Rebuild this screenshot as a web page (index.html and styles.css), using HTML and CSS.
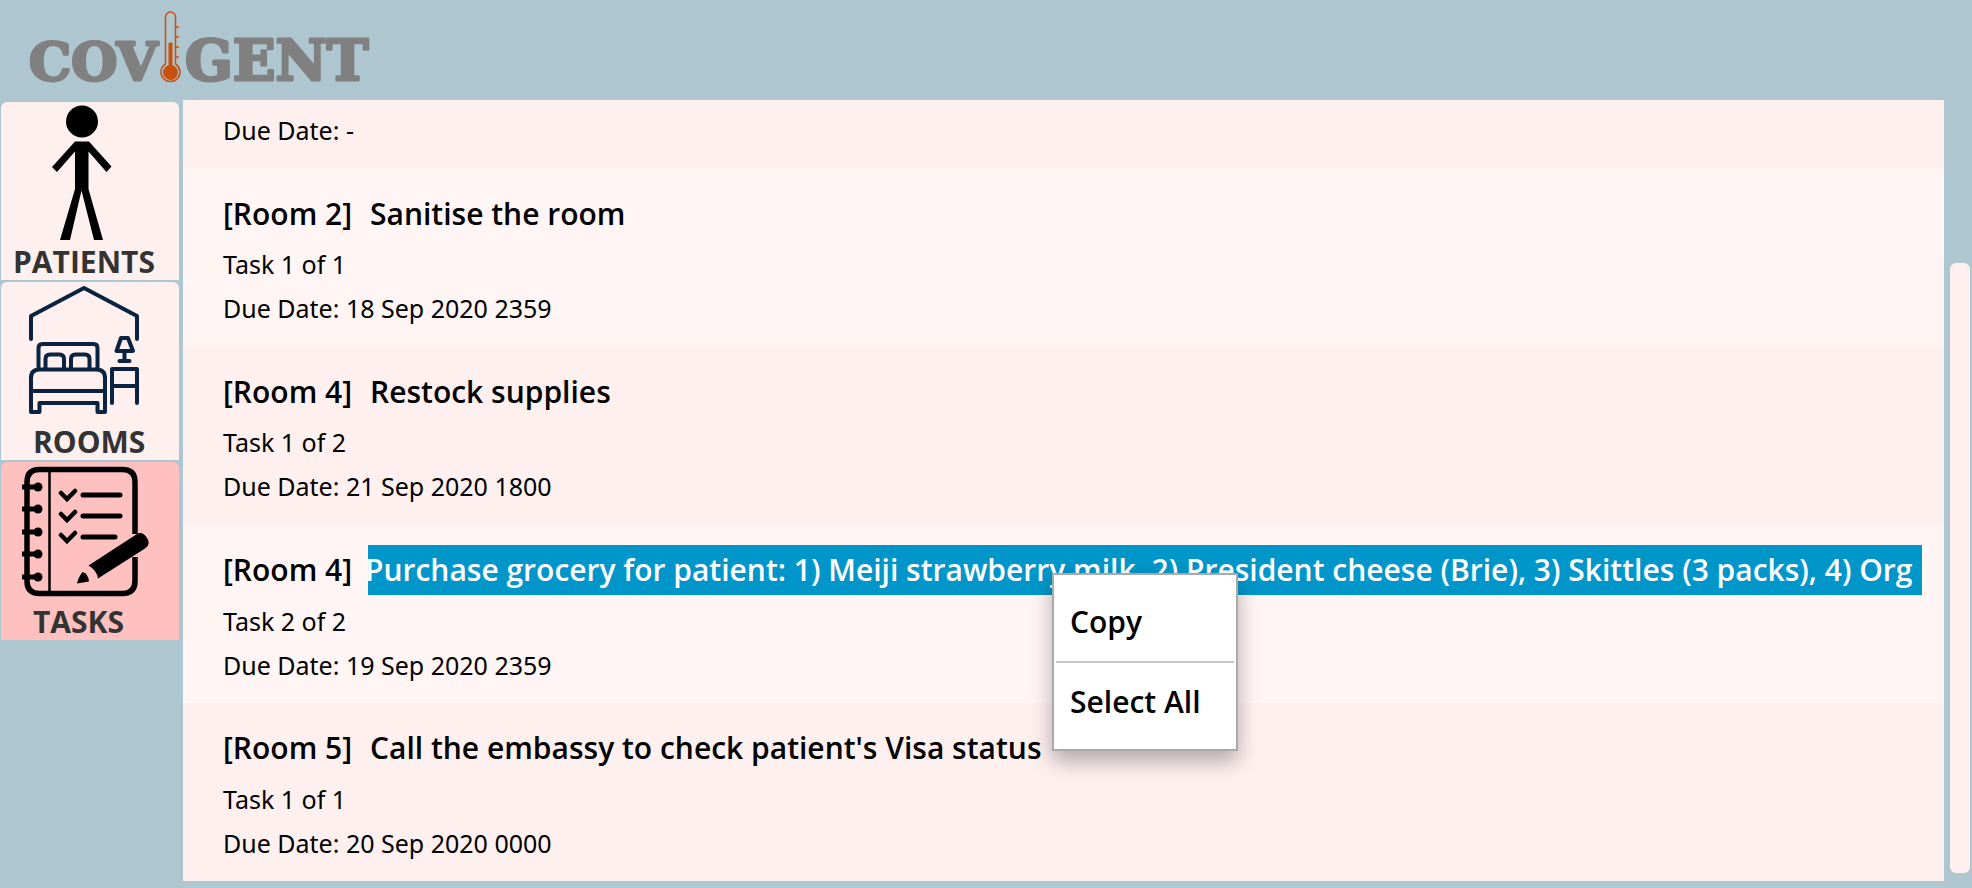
FILE: index.html
```html
<!DOCTYPE html>
<html lang="en">
<head>
<meta charset="utf-8">
<title>Covigent</title>
<link rel="stylesheet" href="styles.css">
</head>
<body>
<div class="app">
  <header class="header">
    <svg class="logo" width="376" height="100" viewBox="0 0 376 100" role="img" aria-label="Covigent">
      <g class="logo-text">
        <text class="logo-start" x="29" y="80">COV</text>
        <text x="185" y="80">GENT</text>
      </g>
      <g fill="none" stroke="#c8500f">
        <path d="M165.500 64V17a5 5 0 0 1 10 0V64a9.500 9.500 0 1 1 -10 0z" stroke-width="1.500"/>
        <path d="M176 27h3M176 37h3M176 47h3M176 57h3" stroke-width="1.500"/>
      </g>
      <circle cx="170.500" cy="72.500" r="7.500" fill="#c8500f"/>
      <path d="M169 43h3v25h-3z" fill="#c8500f" stroke="#c8500f"/>
    </svg>
  </header>

  <nav class="nav" aria-label="Sections">
    <button class="tab" type="button">
      <svg class="tab-icon" width="178" height="144" viewBox="0 0 178 144" aria-hidden="true">
        <circle cx="81" cy="19.500" r="16"/>
        <path d="M74 39.500h14l22.500 25-5 5.500L87.500 49.500V87l14.500 51h-9L80.500 88.500 69 138h-10l15-51V49.500L56 70l-5-5z"/>
      </svg>
      <span class="tab-label">PATIENTS</span>
    </button>
    <button class="tab" type="button">
      <svg class="tab-icon" width="178" height="144" viewBox="0 0 178 144" aria-hidden="true">
        <g fill="none" stroke="#0a2340" stroke-width="4" stroke-linecap="round" stroke-linejoin="round">
          <path d="M30 57V34L83 6l53 28v23"/>
          <path d="M37.500 86V66q0-4 4-4h51q4 0 4 4v20"/>
          <path d="M44.500 86V77q0-4.500 4.500-4.500h9.500q4.500 0 4.500 4.500v9M70 86V77q0-4.500 4.500-4.500H84q4.500 0 4.500 4.500v9"/>
          <path d="M30 130V96q0-8.500 8.500-8.500h57q8.500 0 8.500 8.500v34h-7.500v-9h-58v9zM30 109h74"/>
          <path d="M111 121V87h25v34M111 104h25"/>
          <path d="M120 56h7l5 13h-16.500zM123.500 70v9M118.500 79h10"/>
        </g>
      </svg>
      <span class="tab-label tab-label-rooms">ROOMS</span>
    </button>
    <button class="tab tab-active" type="button" aria-current="page">
      <svg class="tab-icon" width="178" height="144" viewBox="0 0 178 144" aria-hidden="true">
        <g fill="none" stroke="#000">
          <path d="M134 72V20q0-12.500-12.500-12.500h-83Q26 7.500 26 20v99q0 12.500 12.500 12.500h83q12.500 0 12.500-12.500V95" stroke-width="5.500"/>
          <path d="M48.500 8v123" stroke-width="2.500"/>
          <path d="M21 25h16M21 47h16M21 70h16M21 92h16M21 115h16" stroke-width="5"/>
          <path d="M60 31l6 6 8-8M60 52l6 6 8-8M60 73l6 6 8-8" stroke-width="4.500" stroke-linecap="round"/>
          <path d="M82 33h37M82 54h37M82 75h32" stroke-width="5" stroke-linecap="round"/>
        </g>
        <circle cx="37" cy="25" r="4.500"/><circle cx="37" cy="47" r="4.500"/><circle cx="37" cy="70" r="4.500"/><circle cx="37" cy="92" r="4.500"/><circle cx="37" cy="115" r="4.500"/>
        <path d="M87.500 103.500L136 72q5-3 9 2.500 6 7.500-1 12L97 116.500q-1-8-9.500-13z"/>
        <path d="M81.500 110q6 2 6.500 9.500l-12 2q1-5.500 5.500-11.500z"/>
      </svg>
      <span class="tab-label tab-label-tasks">TASKS</span>
    </button>
  </nav>

  <main class="list">
    <article class="task task-partial">
      <p class="line">Due Date: -</p>
    </article>
    <article class="task task-alt">
      <div class="title-row">
        <label class="room" for="t1">[Room 2]</label>
        <input class="title" id="t1" type="text" readonly value="Sanitise the room">
      </div>
      <p class="line">Task 1 of 1</p>
      <p class="line">Due Date: 18 Sep 2020 2359</p>
    </article>
    <article class="task">
      <div class="title-row">
        <label class="room" for="t2">[Room 4]</label>
        <input class="title" id="t2" type="text" readonly value="Restock supplies">
      </div>
      <p class="line">Task 1 of 2</p>
      <p class="line">Due Date: 21 Sep 2020 1800</p>
    </article>
    <article class="task task-alt">
      <div class="title-row">
        <label class="room" for="t3">[Room 4]</label>
        <input class="title title-selected" id="t3" type="text" readonly value="Purchase grocery for patient: 1) Meiji strawberry milk, 2) President cheese (Brie), 3) Skittles (3 packs), 4) Org">
      </div>
      <p class="line">Task 2 of 2</p>
      <p class="line">Due Date: 19 Sep 2020 2359</p>
      <div class="menu" role="menu">
        <button class="menu-item" type="button" role="menuitem">Copy</button>
        <hr class="menu-rule">
        <button class="menu-item" type="button" role="menuitem">Select All</button>
      </div>
    </article>
    <article class="task">
      <div class="title-row">
        <label class="room" for="t4">[Room 5]</label>
        <input class="title" id="t4" type="text" readonly value="Call the embassy to check patient's Visa status">
      </div>
      <p class="line">Task 1 of 1</p>
      <p class="line">Due Date: 20 Sep 2020 0000</p>
    </article>
  </main>

  <div class="scrollbar"><div class="thumb"></div></div>
</div>
</body>
</html>
```
FILE: styles.css
```css
* { box-sizing: border-box; }

body {
  margin: 0;
  background: #aec6cf;
  color: #000;
  font-family: "Noto Sans", "Open Sans", sans-serif;
}

.app {
  display: grid;
  grid-template-columns: 183px minmax(0, 1fr) 28px;
  grid-template-rows: 100px minmax(0, 1fr);
  height: 100vh;
  padding-bottom: 7px;
}

.header { grid-column: 1 / -1; }
.logo { display: block; }

.logo-text {
  font: bold 56px "DejaVu Serif", serif;
  fill: #808080;
  stroke: #808080;
  stroke-width: 3px;
  stroke-linejoin: round;
}

.logo-start { font-size: 53px; }

.nav {
  display: flex;
  flex-direction: column;
  gap: 2px;
  padding: 2px 4px 0 1px;
}

.tab {
  display: flex;
  flex-direction: column;
  width: 100%;
  height: 178px;
  padding: 0;
  border: 0;
  border-radius: 6px 6px 0 0;
  background: #fff0f0;
  color: #333;
  font: bold 30px "Open Sans", sans-serif;
  text-align: left;
}

.tab-active { background: #ffc0c0; }
.tab-icon { display: block; flex: none; }
.tab-label { padding-left: 12px; line-height: 32px; }
.tab-label-rooms, .tab-label-tasks { padding-left: 32px; }

.list {
  display: flex;
  flex-direction: column;
  overflow: hidden;
}

.task {
  position: relative;
  flex: 1 0 auto;
  padding: 20px 20px 16px 40px;
  background: #fff0f0;
}

.task-alt { background: #fff5f4; }
.task-partial { flex: none; padding-top: 8px; }

.title-row {
  display: flex;
  align-items: center;
  height: 50px;
  margin-bottom: 4px;
}

.room, .title, .menu-item {
  font-family: "Open Sans", "Noto Sans", sans-serif;
  font-size: 30px;
  font-weight: 550;
}

.room { flex: none; width: 145px; }

.title {
  flex: 1;
  min-width: 0;
  height: 50px;
  padding: 0 2px;
  border: 0;
  outline: 0;
  background: transparent;
  color: #000;
}

.title-selected {
  margin-right: 2px;
  padding: 0;
  background: #0096c9;
  color: #fff;
  text-indent: -3px;
}

.line { margin: 0; font-size: 25px; line-height: 44px; }

.menu {
  position: absolute;
  z-index: 1;
  top: 48px;
  left: 869px;
  width: 186px;
  padding: 8px 2px;
  border: 2px solid #aaa;
  background: #fff;
  box-shadow: 0 10px 20px rgba(0, 0, 0, 0.3);
}

.menu-item {
  display: block;
  width: 100%;
  height: 78px;
  padding: 0 14px;
  border: 0;
  background: none;
  color: #000;
  text-align: left;
}

.menu-rule { height: 2px; margin: 0; border: 0; background: #c8c8c8; }

.scrollbar { padding: 163px 2px 8px 6px; }
.thumb { height: 100%; border-radius: 6px; background: #fff0f0; }
```
